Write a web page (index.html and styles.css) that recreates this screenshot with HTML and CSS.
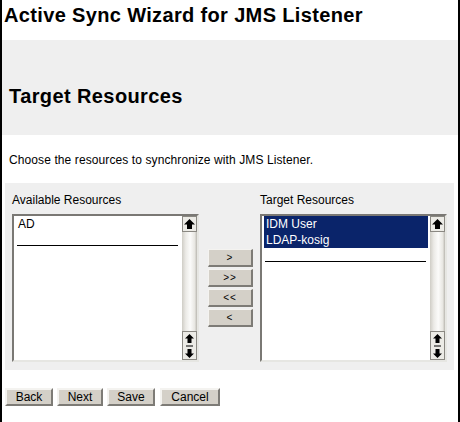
FILE: index.html
```html
<!DOCTYPE html>
<html>
<head>
<meta charset="utf-8">
<link rel="stylesheet" href="styles.css">
</head>
<body>
<div class="page">
  <h1 class="title">Active Sync Wizard for JMS Listener</h1>
  <div class="band-head">
    <h2 class="subtitle">Target Resources</h2>
  </div>
  <p class="intro">Choose the resources to synchronize with JMS Listener.</p>
  <div class="band">
    <div class="col">
      <div class="label">Available Resources</div>
      <div class="listbox">
        <div class="items">
          <div class="row">AD</div>
          <div class="row"><span class="rule"></span></div>
        </div>
        <div class="scroll">
          <div class="sbtn top">
            <svg width="11" height="10" viewBox="0 0 11 10"><polygon points="5.5,0 11,5.5 8,5.5 8,10 3,10 3,5.5 0,5.5" fill="#000"/></svg>
          </div>
          <div class="track"></div>
          <div class="sbtn bottom">
            <svg width="11" height="26" viewBox="0 0 11 26"><polygon points="5.5,1 10,5.5 7.5,5.5 7.5,10 3.5,10 3.5,5.5 1,5.5" fill="#000"/><rect x="2" y="12.5" width="7" height="1" fill="#000"/><polygon points="5.5,25 10,20.5 7.5,20.5 7.5,16 3.5,16 3.5,20.5 1,20.5" fill="#000"/></svg>
          </div>
        </div>
      </div>
    </div>
    <div class="movers">
      <div class="mbtn">&gt;</div>
      <div class="mbtn">&gt;&gt;</div>
      <div class="mbtn">&lt;&lt;</div>
      <div class="mbtn">&lt;</div>
    </div>
    <div class="col">
      <div class="label">Target Resources</div>
      <div class="listbox">
        <div class="items">
          <div class="row sel">IDM User</div>
          <div class="row sel">LDAP-kosig</div>
          <div class="row"><span class="rule"></span></div>
        </div>
        <div class="scroll">
          <div class="sbtn top">
            <svg width="11" height="10" viewBox="0 0 11 10"><polygon points="5.5,0 11,5.5 8,5.5 8,10 3,10 3,5.5 0,5.5" fill="#000"/></svg>
          </div>
          <div class="track"></div>
          <div class="sbtn bottom">
            <svg width="11" height="26" viewBox="0 0 11 26"><polygon points="5.5,1 10,5.5 7.5,5.5 7.5,10 3.5,10 3.5,5.5 1,5.5" fill="#000"/><rect x="2" y="12.5" width="7" height="1" fill="#000"/><polygon points="5.5,25 10,20.5 7.5,20.5 7.5,16 3.5,16 3.5,20.5 1,20.5" fill="#000"/></svg>
          </div>
        </div>
      </div>
    </div>
  </div>
  <div class="actions">
    <div class="btn w-back">Back</div>
    <div class="btn w-next">Next</div>
    <div class="btn w-save">Save</div>
    <div class="btn w-cancel">Cancel</div>
  </div>
</div>
</body>
</html>
```
FILE: styles.css
```css
html, body {
  margin: 0;
  padding: 0;
  background: #fff;
}
body {
  font-family: "Liberation Sans", Arial, sans-serif;
  color: #000;
}
.page {
  width: 460px;
  height: 422px;
  box-sizing: border-box;
  border-left: 2px solid #000;
  border-right: 2px solid #000;
  overflow: hidden;
}
.title {
  margin: 0;
  padding: 3px 0 0 2px;
  font-size: 20px;
  line-height: 24px;
  font-weight: bold;
  letter-spacing: 0.35px;
}
.band-head {
  margin-top: 13px;
  margin-right: -2px;
  height: 95px;
  box-sizing: border-box;
  background: #efefef;
  padding: 44px 0 0 7px;
}
.subtitle {
  margin: 0;
  font-size: 20px;
  line-height: 24px;
  font-weight: bold;
  letter-spacing: 0.4px;
}
.intro {
  margin: 18px 0 0 7px;
  font-size: 12px;
  line-height: 14px;
  letter-spacing: 0.1px;
}
.band {
  margin: 16px 0 0 3px;
  width: 449px;
  height: 187px;
  box-sizing: border-box;
  background: #efefef;
  padding: 10px 0 0 7px;
  display: flex;
  align-items: flex-start;
}
.col {
  display: flex;
  flex-direction: column;
  width: 187px;
}
.label {
  font-size: 12px;
  line-height: 14px;
  height: 14px;
  margin-bottom: 7px;
}
.listbox {
  width: 187px;
  height: 148px;
  box-sizing: border-box;
  border-top: 2px solid #7a7874;
  border-left: 2px solid #7a7874;
  border-bottom: 2px solid #e6e6e2;
  border-right: 2px solid #e6e6e2;
  background: #fff;
  display: flex;
}
.items {
  flex: 1;
  padding: 0 2px;
}
.row {
  height: 16px;
  line-height: 16px;
  font-size: 12px;
  padding-left: 2px;
  position: relative;
}
.row.sel {
  background: #0a246a;
  color: #fff;
}
.rule {
  position: absolute;
  left: 1px;
  right: 2px;
  top: 13px;
  height: 1px;
  background: #000;
}
.scroll {
  width: 15px;
  display: flex;
  flex-direction: column;
  background: linear-gradient(to right, #cfcdc6 0%, #ebeae6 25%, #fbfbfa 55%, #e8e7e2 85%, #b9b7b0 100%);
}
.sbtn {
  box-sizing: border-box;
  border: 1px solid #8a8882;
  background: #ecebe6;
  display: flex;
  align-items: center;
  justify-content: center;
}
.sbtn.top {
  height: 16px;
}
.sbtn.bottom {
  height: 29px;
}
.track {
  flex: 1;
}
.movers {
  margin: 56px 7px 0 9px;
  display: flex;
  flex-direction: column;
  gap: 2px;
}
.mbtn {
  width: 45px;
  height: 18px;
  box-sizing: border-box;
  background: #d4d0c8;
  border-top: 1px solid #f4f3f0;
  border-left: 1px solid #f4f3f0;
  border-bottom: 2px solid #7d7b76;
  border-right: 2px solid #7d7b76;
  font-size: 10px;
  line-height: 15px;
  text-align: center;
  letter-spacing: 1px;
}
.actions {
  margin: 18px 0 0 3px;
  display: flex;
  gap: 4px;
}
.btn {
  height: 18px;
  box-sizing: border-box;
  background: #d4d0c8;
  border-top: 2px solid #f4f3f0;
  border-left: 2px solid #f4f3f0;
  border-bottom: 2px solid #7d7b76;
  border-right: 2px solid #7d7b76;
  font-size: 12px;
  line-height: 14px;
  text-align: center;
}
.w-back { width: 48px; }
.w-next { width: 46px; }
.w-save { width: 48px; }
.w-cancel { width: 60px; margin-left: 1px; }
```
